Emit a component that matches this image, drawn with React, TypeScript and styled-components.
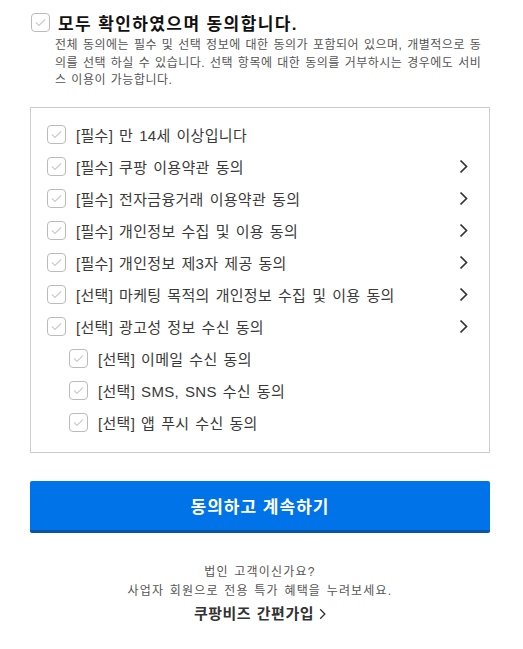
import React from 'react';
import styled, { createGlobalStyle } from 'styled-components';

const GlobalStyle = createGlobalStyle`
    body {
        margin: 0;
        background: #fff;
        font-family: "Liberation Sans", "Noto Sans CJK KR", sans-serif;
        color: #333;
    }
`

const Page = styled.div`
    width: 460px;
    padding: 12px 0 0 30px;
`

const AllRow = styled.label`
    display: flex;
    align-items: center;
    gap: 8px;
    padding-left: 1px;
    height: 20px;
`

const Title = styled.span`
    font-size: 17px;
    font-weight: bold;
    color: #111;
    letter-spacing: 1.4px;
`

const Description = styled.p`
    margin: 5px 0 0 25px;
    font-size: 12px;
    line-height: 17.5px;
    color: #555;
    letter-spacing: 0.5px;
    word-spacing: 1px;
    word-break: break-all;
`

const Box = styled.div`
    margin-top: 17px;
    border: 1px solid #ccc;
    padding: 11px 21px 13px 16px;
`

const Row = styled.div<{ $sub?: boolean }>`
    display: flex;
    align-items: center;
    height: 32px;
    padding-left: ${p => (p.$sub ? '22px' : '0')};
`

const Label = styled.span`
    flex: 1;
    margin-left: 10px;
    font-size: 15px;
    color: #3a3a3a;
    letter-spacing: 0.3px;
    word-spacing: 1.5px;
`

const Box18 = styled.span`
    display: inline-flex;
    align-items: center;
    justify-content: center;
    flex: none;
    width: 17px;
    height: 17px;
    border: 1px solid #bbb;
    border-radius: 4px;
    background: #fff;
`

const Button = styled.button`
    display: block;
    width: 460px;
    height: 52px;
    margin-top: 28px;
    border: none;
    border-bottom: 3px solid #0a55a5;
    border-radius: 2px;
    background: #0073e9;
    color: #fff;
    font-family: inherit;
    font-size: 17px;
    font-weight: bold;
    letter-spacing: 1px;
    cursor: pointer;
`

const Footer = styled.div`
    margin-top: 30px;
    text-align: center;
    font-size: 12px;
    line-height: 19px;
    color: #555;
    letter-spacing: 1.2px;
    word-spacing: 1px;
`

const BizLink = styled.a`
    display: inline-flex;
    align-items: center;
    gap: 5px;
    margin-top: 3px;
    font-size: 15px;
    font-weight: bold;
    color: #333;
    text-decoration: none;
    line-height: 20px;
    letter-spacing: 0.5px;
`

const CheckBox = () => (
    <Box18>
        <svg width="11" height="9" viewBox="0 0 11 9">
            <polyline points="1,4.5 4,7.5 10,1.5" fill="none" stroke="#ccc" strokeWidth="1.2" />
        </svg>
    </Box18>
)

const Chevron = ({ size = 15 }: { size?: number }) => (
    <svg width={Math.round(size * 0.6)} height={size} viewBox="0 0 9 15">
        <polyline points="1.5,1.5 7.5,7.5 1.5,13.5" fill="none" stroke="#333" strokeWidth="1.7" />
    </svg>
)

const terms = [
    { text: '[필수] 만 14세 이상입니다', more: false },
    { text: '[필수] 쿠팡 이용약관 동의', more: true },
    { text: '[필수] 전자금융거래 이용약관 동의', more: true },
    { text: '[필수] 개인정보 수집 및 이용 동의', more: true },
    { text: '[필수] 개인정보 제3자 제공 동의', more: true },
    { text: '[선택] 마케팅 목적의 개인정보 수집 및 이용 동의', more: true },
    { text: '[선택] 광고성 정보 수신 동의', more: true },
    { text: '[선택] 이메일 수신 동의', sub: true },
    { text: '[선택] SMS, SNS 수신 동의', sub: true },
    { text: '[선택] 앱 푸시 수신 동의', sub: true },
]

export default function App() {
    return (
        <Page>
            <GlobalStyle />
            <AllRow>
                <CheckBox />
                <Title>모두 확인하였으며 동의합니다.</Title>
            </AllRow>
            <Description>
                전체 동의에는 필수 및 선택 정보에 대한 동의가 포함되어 있으며, 개별적으로 동의를 선택 하실 수 있습니다. 선택 항목에 대한 동의를 거부하시는 경우에도 서비스 이용이 가능합니다.
            </Description>
            <Box>
                {terms.map(t => (
                    <Row key={t.text} $sub={t.sub}>
                        <CheckBox />
                        <Label>{t.text}</Label>
                        {t.more && <Chevron />}
                    </Row>
                ))}
            </Box>
            <Button>동의하고 계속하기</Button>
            <Footer>
                <div>법인 고객이신가요?</div>
                <div>사업자 회원으로 전용 특가 혜택을 누려보세요.</div>
                <BizLink href="#">
                    쿠팡비즈 간편가입
                    <Chevron size={12} />
                </BizLink>
            </Footer>
        </Page>
    )
}
